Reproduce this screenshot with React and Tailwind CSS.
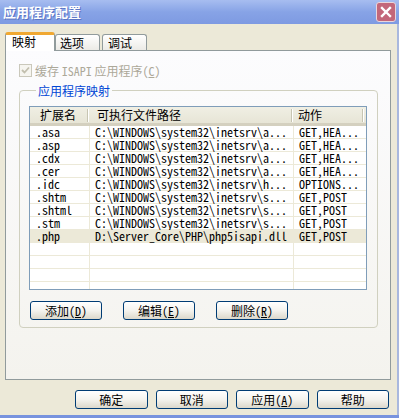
import React from 'react';

const cjk = "font-['Noto_Sans_CJK_SC',sans-serif]";
const mono = "font-['Noto_Sans_Mono_CJK_SC','DejaVu_Sans_Mono',monospace]";

const mappings = [
  ['.asa', 'C:\\WINDOWS\\system32\\inetsrv\\a...', 'GET,HEA...'],
  ['.asp', 'C:\\WINDOWS\\system32\\inetsrv\\a...', 'GET,HEA...'],
  ['.cdx', 'C:\\WINDOWS\\system32\\inetsrv\\a...', 'GET,HEA...'],
  ['.cer', 'C:\\WINDOWS\\system32\\inetsrv\\a...', 'GET,HEA...'],
  ['.idc', 'C:\\WINDOWS\\system32\\inetsrv\\h...', 'OPTIONS...'],
  ['.shtm', 'C:\\WINDOWS\\system32\\inetsrv\\s...', 'GET,POST'],
  ['.shtml', 'C:\\WINDOWS\\system32\\inetsrv\\s...', 'GET,POST'],
  ['.stm', 'C:\\WINDOWS\\system32\\inetsrv\\s...', 'GET,POST'],
  ['.php', 'D:\\Server_Core\\PHP\\php5isapi.dll', 'GET,POST'],
];

const XpButton = ({ label, hotkey, width = 'w-[72px]' }) => (
  <button
    className={`${width} h-[19px] rounded-[3px] border border-[#003c74] bg-linear-to-b from-[#ffffff] via-[#f4f3ee] to-[#dcd8cb] flex items-center justify-center text-[12px] leading-none text-black ${cjk}`}
  >
    <span>{label}</span>
    {hotkey && (
      <span className={`${mono} text-[12px]`}>
        (<span className="underline">{hotkey}</span>)
      </span>
    )}
  </button>
);

const Row = ({ cells, selected }) => (
  <div className={`flex h-[13px] border-b border-[#ece9d8] ${selected ? 'bg-[#ece9d8]' : ''}`}>
    <div className={`w-[60px] h-[12px] border-r border-[#ece9d8] pl-[6px] text-[12px] leading-[11px] whitespace-nowrap ${mono}`}>{cells[0]}</div>
    <div className={`w-[204px] h-[12px] border-r border-[#ece9d8] pl-[5px] text-[12px] leading-[11px] whitespace-nowrap ${mono}`}>{cells[1]}</div>
    <div className={`flex-1 h-[12px] pl-[5px] text-[12px] leading-[11px] whitespace-nowrap ${mono}`}>{cells[2]}</div>
  </div>
);

const App = () => {
  return (
    <div className={`w-[399px] h-[418px] bg-[#ece9d8] flex flex-col overflow-hidden ${cjk}`}>
      {/* title bar */}
      <div className="h-[24px] flex items-center justify-between pl-[3px] pr-[3px] bg-linear-to-b from-[#a7bdf0] via-[#87a3e6] to-[#7e9ae2]">
        <span className="text-white font-bold text-[13px] [text-shadow:1px_1px_#5b75c4]">应用程序配置</span>
        <div className="w-[20px] h-[20px] rounded-[3px] border border-[#e9d6dc] bg-[#c3677a] flex items-center justify-center">
          <svg width="12" height="12" viewBox="0 0 12 12">
            <path d="M2 2 L10 10 M10 2 L2 10" stroke="white" strokeWidth="2.4" strokeLinecap="square" />
          </svg>
        </div>
      </div>

      <div className="flex-1 flex flex-col pl-[5px] pr-[8px] pt-[8px] border-r-2 border-[#a9b8de]">
        {/* tabs */}
        <div className="flex items-end h-[18px]">
          <div className="relative z-10 -mb-[1px] w-[50px] h-[19px] bg-white border-x border-[#919b9c] rounded-t-[3px] border-t-[3px] border-t-[#f0a832] pl-[6px] text-[12px] leading-[14px] text-black">
            映射
          </div>
          <div className="w-[45px] h-[16px] rounded-t-[3px] border border-b-0 border-[#919b9c] bg-linear-to-b from-white to-[#ecebe6] pl-[4px] text-[12px] leading-[15px] text-black">
            选项
          </div>
          <div className="ml-[2px] w-[45px] h-[16px] rounded-t-[3px] border border-b-0 border-[#919b9c] bg-linear-to-b from-white to-[#ecebe6] pl-[5px] text-[12px] leading-[15px] text-black">
            调试
          </div>
        </div>

        {/* tab page */}
        <div className="w-[386px] h-[330px] border border-[#919b9c] bg-linear-to-b from-[#fcfcfe] to-[#f4f3ee] flex flex-col pt-[13px] pl-[13px] pr-[12px]">
          <div className="flex items-center h-[13px]">
            <div className="w-[13px] h-[13px] border border-[#cac8bb] bg-[#f6f5f0] flex items-center justify-center">
              <svg width="9" height="9" viewBox="0 0 9 9">
                <path d="M1 4 L3.5 6.5 L8 1.5" fill="none" stroke="#c2bfae" strokeWidth="1.8" />
              </svg>
            </div>
            <span className="ml-[3px] text-[12px] text-[#aca899] leading-none">
              缓存 <span className={mono}>ISAPI</span> 应用程序<span className={mono}>(<span className="underline">C</span>)</span>
            </span>
          </div>

          <fieldset className="mt-[6px] border border-[#d0d0bf] rounded-[4px] pl-[9px] pb-[7px]">
            <legend className="ml-[7px] px-[2px] text-[12px] leading-[15px] text-[#0046d5]">应用程序映射</legend>

            <div className="mt-[8px] w-[338px] h-[184px] border border-[#7f9db9] bg-white flex flex-col">
              {/* header */}
              <div className="h-[19px] flex bg-linear-to-b from-[#f0efe4] to-[#e7e5d6] border-b-[3px] border-[#d4d0bf] text-[12px] leading-[16px] text-black">
                <div className="w-[59px] pl-[10px] flex items-center justify-between">
                  <span>扩展名</span>
                  <span className="w-[2px] h-[13px] border-l border-[#c7c5b2] border-r border-r-white" />
                </div>
                <div className="w-[204px] pl-[8px] flex items-center justify-between">
                  <span>可执行文件路径</span>
                  <span className="w-[2px] h-[13px] border-l border-[#c7c5b2] border-r border-r-white" />
                </div>
                <div className="w-[71px] pl-[5px] flex items-center justify-between">
                  <span>动作</span>
                  <span className="w-[2px] h-[13px] border-l border-[#c7c5b2] border-r border-r-white" />
                </div>
              </div>

              {mappings.map((m) => (
                <Row key={m[0]} cells={m} selected={m[0] === '.php'} />
              ))}
              <Row cells={['', '', '']} />
              <Row cells={['', '', '']} />
              <Row cells={['', '', '']} />
              <div className="flex-1 flex">
                <div className="w-[60px] border-r border-[#ece9d8]" />
                <div className="w-[204px] border-r border-[#ece9d8]" />
              </div>
            </div>

            <div className="mt-[11px] ml-[1px] flex gap-[21px]">
              <XpButton label="添加" hotkey="D" />
              <XpButton label="编辑" hotkey="E" />
              <XpButton label="删除" hotkey="R" />
            </div>
          </fieldset>
        </div>

        {/* dialog buttons */}
        <div className="mt-[10px] ml-[70px] flex gap-[8px]">
          <XpButton label="确定" width="w-[73px]" />
          <XpButton label="取消" width="w-[73px]" />
          <XpButton label="应用" hotkey="A" width="w-[73px]" />
          <XpButton label="帮助" width="w-[73px]" />
        </div>
      </div>

      <div className="h-[3px] bg-[#7893de]" />
    </div>
  );
};

export default App;
